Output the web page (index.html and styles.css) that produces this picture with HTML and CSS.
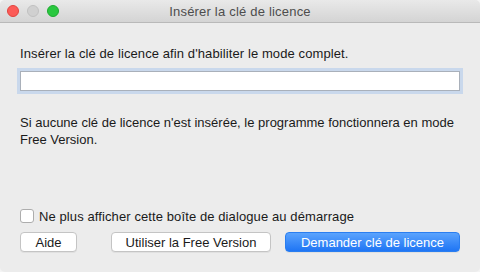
FILE: index.html
```html
<!DOCTYPE html>
<html lang="fr">
<head>
<meta charset="utf-8">
<title>Insérer la clé de licence</title>
<link rel="stylesheet" href="styles.css">
</head>
<body>
<div class="window">
  <div class="titlebar">
    <div class="lights">
      <span class="light red"></span>
      <span class="light grey"></span>
      <span class="light green"></span>
    </div>
    <div class="title">Insérer la clé de licence</div>
  </div>
  <div class="content">
    <p class="intro">Insérer la clé de licence afin d'habiliter le mode complet.</p>
    <div class="field"><input class="key" type="text"></div>
    <p class="note">Si aucune clé de licence n'est insérée, le programme fonctionnera en mode Free Version.</p>
    <label class="check"><span class="box"></span>Ne plus afficher cette boîte de dialogue au démarrage</label>
    <div class="buttons">
      <button class="btn help">Aide</button>
      <button class="btn free">Utiliser la Free Version</button>
      <button class="btn primary">Demander clé de licence</button>
    </div>
  </div>
</div>
</body>
</html>
```

FILE: styles.css
```css
* { box-sizing: border-box; }
html, body { margin: 0; padding: 0; background: #f4f4f4; }
body { width: 480px; height: 272px; overflow: hidden; font-family: "Liberation Sans", Arial, sans-serif; font-size: 13px; color: #1a1a1a; letter-spacing: 0.1px; }
.window { width: 480px; height: 272px; display: flex; flex-direction: column; background: #ececec; border-radius: 5px; overflow: hidden; }
.titlebar { height: 23px; flex: none; display: flex; align-items: center; position: relative; background: linear-gradient(#e9e9e9, #d4d4d4); border-bottom: 1px solid #b9b9b9; }
.lights { display: flex; gap: 8px; padding-left: 7px; }
.light { width: 12px; height: 12px; border-radius: 50%; }
.red { background: #fc5b57; border: 1px solid #e0443e; }
.grey { background: #d0d0d0; border: 1px solid #c0c0c0; }
.green { background: #2ac840; border: 1px solid #1eaa30; }
.title { position: absolute; left: 0; right: 0; text-align: center; color: #4d4d4d; font-size: 13px; letter-spacing: 0.2px; }
.content { flex: 1; display: flex; flex-direction: column; padding: 22px 20px 20px 20px; }
p { margin: 0; line-height: 17px; }
.intro { margin-bottom: 9px; }
.field { height: 20px; margin-bottom: 23px; }
.key { width: 440px; height: 20px; border: 1px solid #a9b0ba; background: #fff; box-shadow: 0 0 0 3px #c9d8ec; outline: none; padding: 0 4px; font: inherit; }
.note { line-height: 17px; letter-spacing: 0; }
.check { margin-top: auto; display: flex; align-items: center; gap: 5px; height: 16px; margin-bottom: 8px; }
.box { width: 14px; height: 14px; border: 1px solid #adadad; border-radius: 3px; background: #fff; }
.buttons { display: flex; height: 20px; }
.btn { height: 20px; font: inherit; font-size: 13px; color: #1a1a1a; background: #fff; border: 1px solid #c4c4c4; border-radius: 4px; box-shadow: 0 1px 0 rgba(0,0,0,0.05); padding: 0; }
.help { width: 57px; }
.free { width: 160px; margin-left: 34px; }
.primary { width: 175px; margin-left: 14px; color: #fff; border-color: #2a7ef0; background: linear-gradient(#5aa3fd, #1f75f4); }
```
